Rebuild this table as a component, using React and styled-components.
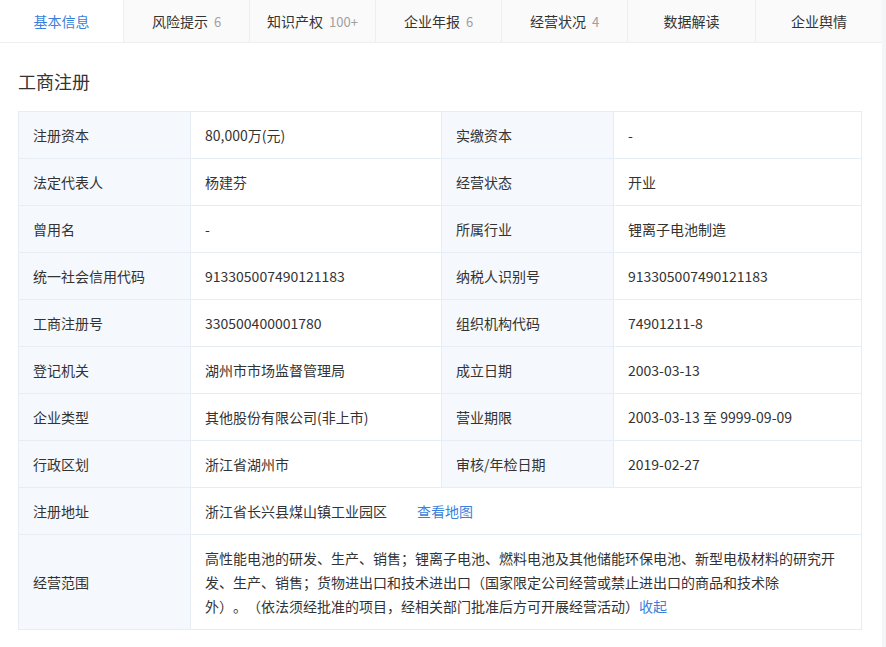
import styled, { createGlobalStyle } from 'styled-components';

const tabs = [
  { name: '基本信息', active: true },
  { name: '风险提示', count: '6' },
  { name: '知识产权', count: '100+' },
  { name: '企业年报', count: '6' },
  { name: '经营状况', count: '4' },
  { name: '数据解读' },
  { name: '企业舆情' },
];

const rows = [
  ['注册资本', '80,000万(元)', '实缴资本', '-'],
  ['法定代表人', '杨建芬', '经营状态', '开业'],
  ['曾用名', '-', '所属行业', '锂离子电池制造'],
  ['统一社会信用代码', '913305007490121183', '纳税人识别号', '913305007490121183'],
  ['工商注册号', '330500400001780', '组织机构代码', '74901211-8'],
  ['登记机关', '湖州市市场监督管理局', '成立日期', '2003-03-13'],
  ['企业类型', '其他股份有限公司(非上市)', '营业期限', '2003-03-13 至 9999-09-09'],
  ['行政区划', '浙江省湖州市', '审核/年检日期', '2019-02-27'],
];

export default function App() {
  return (
    <>
      <GlobalStyle />
      <Page>
        <TabBar>
          {tabs.map((t) => (
            <Tab key={t.name} $active={t.active}>
              {t.name}
              {t.count && <Count>{t.count}</Count>}
            </Tab>
          ))}
        </TabBar>
        <Section>
          <Title>工商注册</Title>
          <Table>
            <colgroup>
              <col style={{ width: 172 }} />
              <col style={{ width: 251 }} />
              <col style={{ width: 172 }} />
              <col />
            </colgroup>
            <tbody>
              {rows.map((r) => (
                <tr key={r[0]}>
                  <Label>{r[0]}</Label>
                  <Value>{r[1]}</Value>
                  <Label>{r[2]}</Label>
                  <Value>{r[3]}</Value>
                </tr>
              ))}
              <tr>
                <Label>注册地址</Label>
                <Value colSpan={3}>
                  浙江省长兴县煤山镇工业园区
                  <Link $gap>查看地图</Link>
                </Value>
              </tr>
              <tr>
                <Label>经营范围</Label>
                <Scope colSpan={3}>
                  高性能电池的研发、生产、销售；锂离子电池、燃料电池及其他储能环保电池、新型电极材料的研究开发、生产、销售；货物进出口和技术进出口（国家限定公司经营或禁止进出口的商品和技术除<NoWrap>外）。（依法</NoWrap>须经批准的项目，经相关部门批准后方可开展经营活动）<Link>收起</Link>
                </Scope>
              </tr>
            </tbody>
          </Table>
        </Section>
      </Page>
    </>
  );
}

const GlobalStyle = createGlobalStyle`
  body {
    margin: 0;
    background: #f4f5f7;
    font-family: "Noto Sans CJK SC", "Noto Sans", sans-serif;
    color: #333;
  }
`;

const Page = styled.div`
  width: 882px;
  height: 647px;
  background: #fff;
`;

const TabBar = styled.div`
  display: grid;
  grid-template-columns: 124px 126px 126px 126px 126px 128px 126px;
  height: 42px;
  border-bottom: 1px solid #eceef0;
  background: #fafafa;
`;

const Tab = styled.div`
  display: flex;
  align-items: center;
  justify-content: center;
  font-size: 14px;
  color: ${(p) => (p.$active ? '#3a7fdc' : '#333')};
  background: ${(p) => (p.$active ? '#fff' : '#fafafa')};
  border-right: 1px solid #eeeeee;
  &:last-child {
    border-right: none;
  }
`;

const Count = styled.span`
  margin-left: 6px;
  color: #a0a0a0;
  font-size: 13px;
`;

const Section = styled.div`
  padding: 23px 20px 0 18px;
`;

const Title = styled.h2`
  margin: 0 0 15px;
  font-size: 18px;
  font-weight: normal;
  line-height: 30px;
  color: #333;
`;

const Table = styled.table`
  width: 844px;
  border-collapse: collapse;
  table-layout: fixed;
  font-size: 14px;
  td {
    border: 1px solid #e6edf5;
  }
`;

const Label = styled.td`
  height: 46px;
  padding: 0 0 0 14px;
  background: #f5f8fd;
  color: #333;
`;

const Value = styled.td`
  height: 46px;
  padding: 0 0 0 14px;
  color: #333;
`;

const Scope = styled.td`
  padding: 11px 14px 11px 14px;
  line-height: 24px;
  color: #333;
  text-spacing-trim: space-all;
`;

const NoWrap = styled.span`
  white-space: nowrap;
`;

const Link = styled.span`
  color: #3a7fdc;
  margin-left: ${(p) => (p.$gap ? '30px' : '0')};
  cursor: pointer;
`;
